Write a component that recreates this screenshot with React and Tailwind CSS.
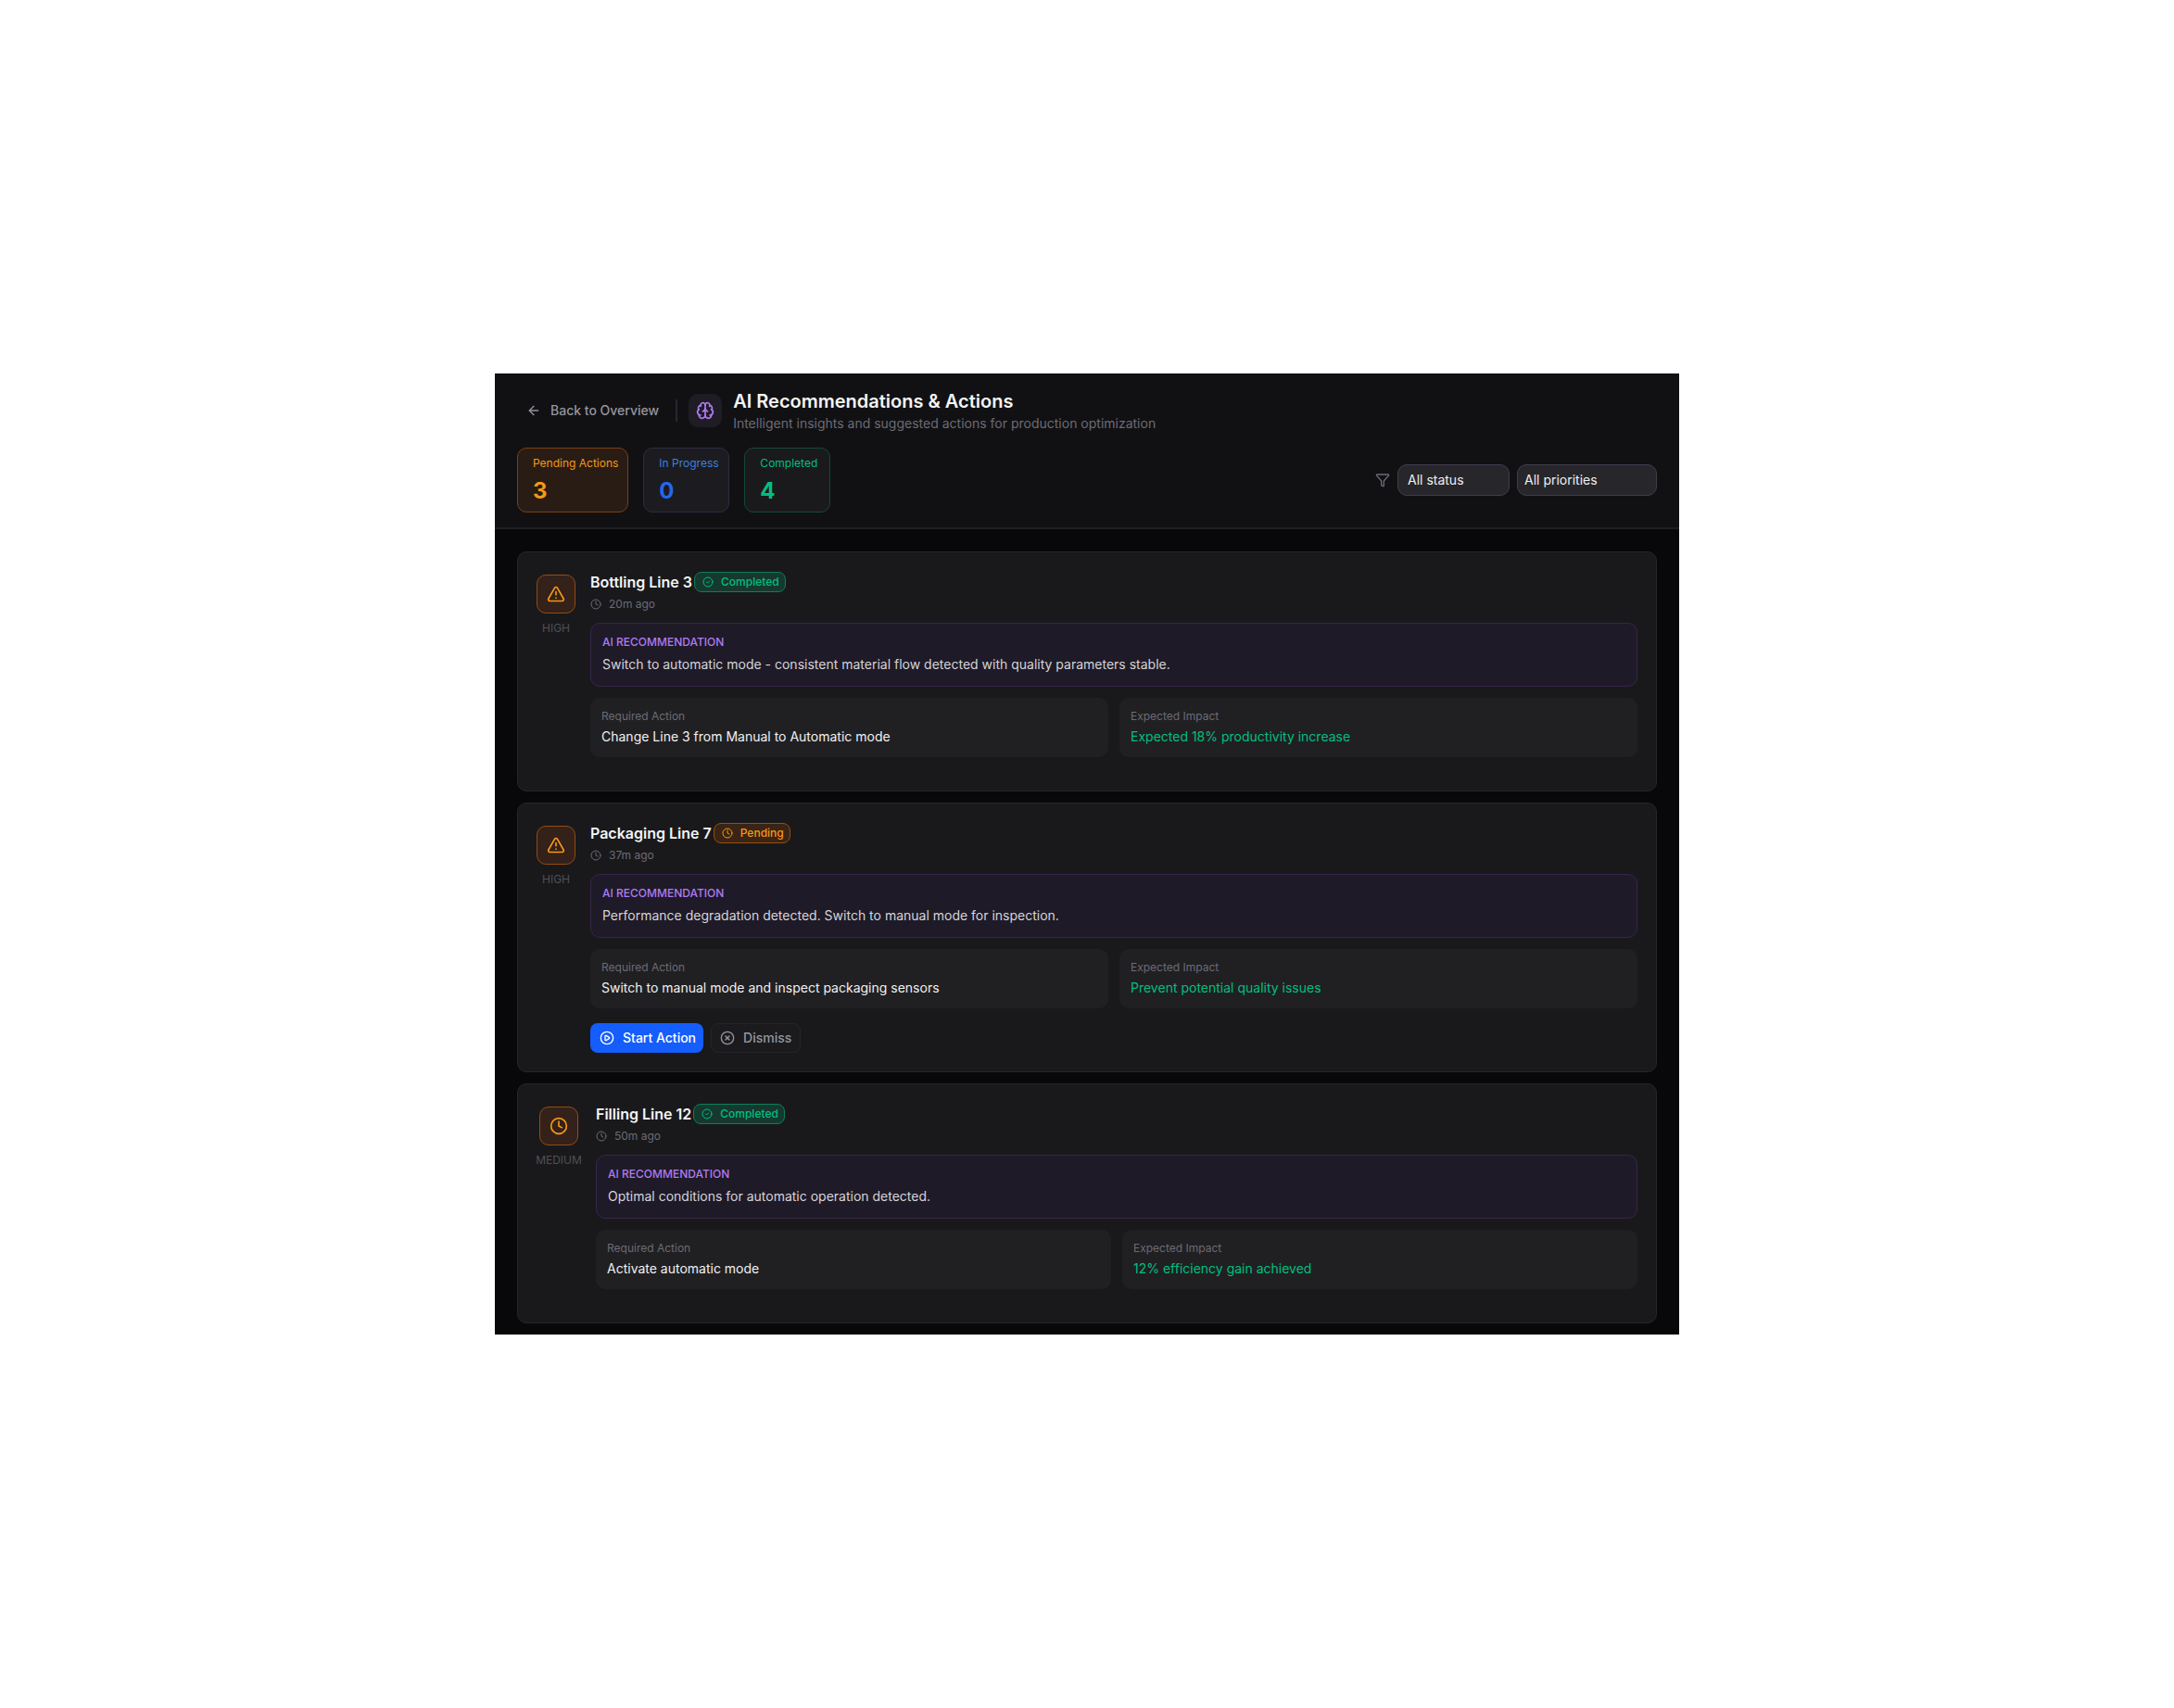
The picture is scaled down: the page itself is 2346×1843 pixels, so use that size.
import React, { useState } from 'react';
import {
  ArrowLeft,
  Brain,
  CircleCheck,
  CirclePlay,
  CircleX,
  Clock,
  Funnel,
  TriangleAlert,
} from 'lucide-react';

const STATS = [
  {
    label: 'Pending Actions',
    value: 3,
    box: 'bg-[#291c15] border-[#7b4012]',
    labelColor: 'text-[#f69815]',
    valueColor: 'text-[#f69815]',
  },
  {
    label: 'In Progress',
    value: 0,
    box: 'bg-[#1c1c20] border-[#2f2a40]',
    labelColor: 'text-[#3f7fdc]',
    valueColor: 'text-[#2467f0]',
  },
  {
    label: 'Completed',
    value: 4,
    box: 'bg-[#1a1a1c] border-[#16473a]',
    labelColor: 'text-[#02bf80]',
    valueColor: 'text-[#02bf80]',
  },
];

const RECOMMENDATIONS = [
  {
    id: 1,
    line: 'Bottling Line 3',
    status: 'completed',
    priority: 'high',
    time: '20m ago',
    text: 'Switch to automatic mode - consistent material flow detected with quality parameters stable.',
    action: 'Change Line 3 from Manual to Automatic mode',
    impact: 'Expected 18% productivity increase',
  },
  {
    id: 2,
    line: 'Packaging Line 7',
    status: 'pending',
    priority: 'high',
    time: '37m ago',
    text: 'Performance degradation detected. Switch to manual mode for inspection.',
    action: 'Switch to manual mode and inspect packaging sensors',
    impact: 'Prevent potential quality issues',
  },
  {
    id: 3,
    line: 'Filling Line 12',
    status: 'completed',
    priority: 'medium',
    time: '50m ago',
    text: 'Optimal conditions for automatic operation detected.',
    action: 'Activate automatic mode',
    impact: '12% efficiency gain achieved',
  },
];

const STATUS = {
  completed: {
    label: 'Completed',
    icon: CircleCheck,
    className: 'bg-[#15392e] border-[#0b7f5c] text-[#02bf80]',
  },
  pending: {
    label: 'Pending',
    icon: Clock,
    className: 'bg-[#3a2415] border-[#964d11] text-[#f69815]',
  },
};

const PRIORITY = {
  high: { label: 'HIGH', icon: TriangleAlert },
  medium: { label: 'MEDIUM', icon: Clock },
};

function StatCard({ stat }) {
  return (
    <div className={`min-w-[93px] rounded-[10px] border pt-2 pb-1.5 pl-4 pr-[10px] ${stat.box}`}>
      <p className={`text-xs ${stat.labelColor}`}>{stat.label}</p>
      <p className={`mt-1.5 text-2xl font-bold ${stat.valueColor}`}>{stat.value}</p>
    </div>
  );
}

function StatusBadge({ status }) {
  const { label, icon: Icon, className } = STATUS[status];
  return (
    <span className={`flex items-center gap-2 rounded-lg border py-[2px] pl-2 pr-[6px] text-xs font-medium ${className}`}>
      <Icon size={12} />
      {label}
    </span>
  );
}

function RecommendationCard({ rec }) {
  const { label, icon: PriorityIcon } = PRIORITY[rec.priority];

  return (
    <article className="flex gap-4 rounded-[10px] border border-[#262629] bg-[#19191b] p-5">
      <div className="flex max-w-12 flex-col items-center pt-1">
        <div className="flex size-[42px] items-center justify-center rounded-[10px] border border-[#944c12] bg-[#34211a] text-[#f69815]">
          <PriorityIcon size={20} />
        </div>
        <span className="mt-2 text-xs text-[#515059]">{label}</span>
      </div>

      <div className="min-w-0 flex-1">
        <div className="flex items-center gap-[2px]">
          <h3 className="font-semibold text-[#f4f4f5]">{rec.line}</h3>
          <StatusBadge status={rec.status} />
        </div>
        <div className="mt-1 flex items-center gap-2 text-xs text-[#6d6a76]">
          <Clock size={12} />
          <span>{rec.time}</span>
        </div>

        <div className="mt-3 rounded-[10px] border border-[#35264a] bg-[#1f1a27] p-3">
          <p className="text-xs font-medium text-[#b07bf0]">AI RECOMMENDATION</p>
          <p className="mt-1 text-sm leading-[23px] text-[#d4d4d8]">{rec.text}</p>
        </div>

        <div className="mt-3 grid grid-cols-2 gap-3">
          <div className="rounded-[10px] bg-[#202022] p-3">
            <p className="text-xs text-[#6d6a76]">Required Action</p>
            <p className="mt-1 text-sm text-[#f0f0f2]">{rec.action}</p>
          </div>
          <div className="rounded-[10px] bg-[#202022] p-3">
            <p className="text-xs text-[#6d6a76]">Expected Impact</p>
            <p className="mt-1 text-sm text-[#02bf80]">{rec.impact}</p>
          </div>
        </div>

        {/* Only pending recommendations can be acted on */}
        <div className="mt-4 flex gap-2">
          {rec.status === 'pending' && (
            <>
              <button type="button" className="flex h-8 items-center gap-[9px] rounded-lg bg-[#155dfc] pl-[10px] pr-2 text-sm font-medium text-white">
                <CirclePlay size={16} />
                Start Action
              </button>
              <button type="button" className="flex h-8 items-center gap-[9px] rounded-lg border border-[#252528] bg-[#1b1b1d] px-[9px] text-sm font-medium text-[#96959f]">
                <CircleX size={16} />
                Dismiss
              </button>
            </>
          )}
        </div>
      </div>
    </article>
  );
}

export default function App() {
  const [status, setStatus] = useState('all');
  const [priority, setPriority] = useState('all');

  const visible = RECOMMENDATIONS.filter(
    (rec) =>
      (status === 'all' || rec.status === status) &&
      (priority === 'all' || rec.priority === priority)
  );

  return (
    <div className="flex min-h-screen items-center justify-center bg-white font-['Inter',sans-serif]">
      <div className="w-full max-w-[1278px] bg-[#08080a]">
        <header className="border-b-2 border-[#1f1f22] bg-[#111113] px-6 py-4">
          <div className="flex items-center">
            <button type="button" className="flex h-8 items-center gap-[10px] px-[10px] text-sm font-medium text-[#96959f]">
              <ArrowLeft size={16} />
              Back to Overview
            </button>
            <div className="ml-2 mr-3 h-6 w-[2px] bg-[#2a2433]" />
            <div className="flex size-9 items-center justify-center rounded-[10px] bg-[#1f1c26] text-[#b07bf0]">
              <Brain size={20} />
            </div>
            <div className="ml-3">
              <h1 className="text-xl font-semibold text-[#f4f4f5]">AI Recommendations &amp; Actions</h1>
              <p className="text-sm text-[#6d6a76]">
                Intelligent insights and suggested actions for production optimization
              </p>
            </div>
          </div>

          <div className="mt-4 flex items-center justify-between">
            <div className="flex gap-4">
              {STATS.map((stat) => (
                <StatCard key={stat.label} stat={stat} />
              ))}
            </div>
            <div className="flex items-center gap-2 text-sm text-[#f0f0f2]">
              <Funnel size={16} className="text-[#6d6a76]" />
              <select
                aria-label="Status"
                value={status}
                onChange={(e) => setStatus(e.target.value)}
                className="h-[34px] w-[121px] appearance-none rounded-[10px] border border-[#423c4f] bg-[#27262b] px-[10px]"
              >
                <option value="all">All status</option>
                <option value="pending">Pending</option>
                <option value="completed">Completed</option>
              </select>
              <select
                aria-label="Priority"
                value={priority}
                onChange={(e) => setPriority(e.target.value)}
                className="h-[34px] w-[151px] appearance-none rounded-[10px] border border-[#423c4f] bg-[#27262b] px-[7px]"
              >
                <option value="all">All priorities</option>
                <option value="high">High</option>
                <option value="medium">Medium</option>
              </select>
            </div>
          </div>
        </header>

        <main className="flex flex-col gap-3 px-6 pb-3 pt-6">
          {visible.map((rec) => (
            <RecommendationCard key={rec.id} rec={rec} />
          ))}
        </main>
      </div>
    </div>
  );
}
